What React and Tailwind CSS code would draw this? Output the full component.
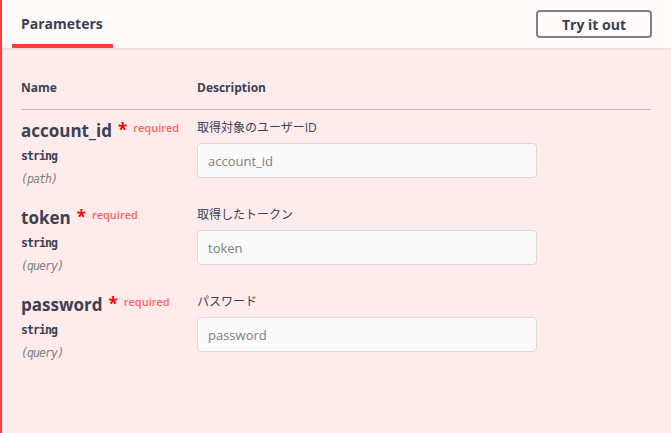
import React from "react";

const params = [
  { name: "account_id", type: "string", where: "(path)", desc: "取得対象のユーザーID" },
  { name: "token", type: "string", where: "(query)", desc: "取得したトークン" },
  { name: "password", type: "string", where: "(query)", desc: "パスワード" },
];

const sans = { fontFamily: '"Open Sans", "Noto Sans CJK JP", sans-serif' };
const mono = { fontFamily: '"DejaVu Sans Mono", monospace' };

const ParamRow = ({ p }) => (
  <div className="flex h-[87px] pt-[10px]">
    <div className="w-[176px] shrink-0">
      <div className="flex items-start h-[22px]">
        <span className="text-[17px] leading-[22px] font-bold text-[#3b4151]">{p.name}</span>
        <span className="ml-[6px] text-[17px] leading-[20px] text-[#ff0000] font-bold">*</span>
        <span className="ml-[6px] text-[11px] leading-[16px] text-[#ff0000]/60 font-semibold">required</span>
      </div>
      <div className="mt-[6px] text-[11.5px] tracking-[-0.9px] leading-[16px] font-bold text-[#3b4151]" style={mono}>
        {p.type}
      </div>
      <div className="mt-[7px] text-[11.5px] tracking-[-0.9px] leading-[16px] italic text-[#808080]" style={mono}>
        {p.where}
      </div>
    </div>
    <div className="flex-1">
      <div className="text-[12px] leading-[16px] text-[#3b4151]">{p.desc}</div>
      <input
        className="mt-[7px] w-[340px] h-[35px] px-[10px] bg-[#fafafa] border border-[#d9d9d9] rounded-[4px] text-[13px] text-[#3b4151] placeholder:text-[#808080] outline-none"
        placeholder={p.name}
        style={sans}
      />
    </div>
  </div>
);

export default function App() {
  return (
    <div className="w-[671px] h-[433px] bg-[#feebeb] border-l-2 border-[#f93e3e] overflow-hidden" style={sans}>
      <div className="h-[48px] bg-white/80 shadow-[0_1px_2px_rgba(0,0,0,0.1)] flex items-end justify-between pl-[10px] pr-[19px]">
        <div className="h-full flex flex-col justify-end">
          <div className="px-[9px] text-[14px] font-bold text-[#3b4151] leading-[20px] mb-[10px]">Parameters</div>
          <div className="h-[4px] w-[101px] bg-[#f93e3e]" />
        </div>
        <button className="self-center h-[28px] w-[116px] border-2 border-[#808080] rounded-[4px] text-[14px] font-bold text-[#3b4151] bg-transparent">
          Try it out
        </button>
      </div>

      <div className="px-[19px]">
        <div className="flex h-[62px] pt-[32px] border-b border-[#3b4151]/30 w-[630px]">
          <div className="w-[176px] text-[12px] font-bold text-[#3b4151] leading-[16px]">Name</div>
          <div className="text-[12px] font-bold text-[#3b4151] leading-[16px]">Description</div>
        </div>
        {params.map((p) => (
          <ParamRow key={p.name} p={p} />
        ))}
      </div>
    </div>
  );
}
